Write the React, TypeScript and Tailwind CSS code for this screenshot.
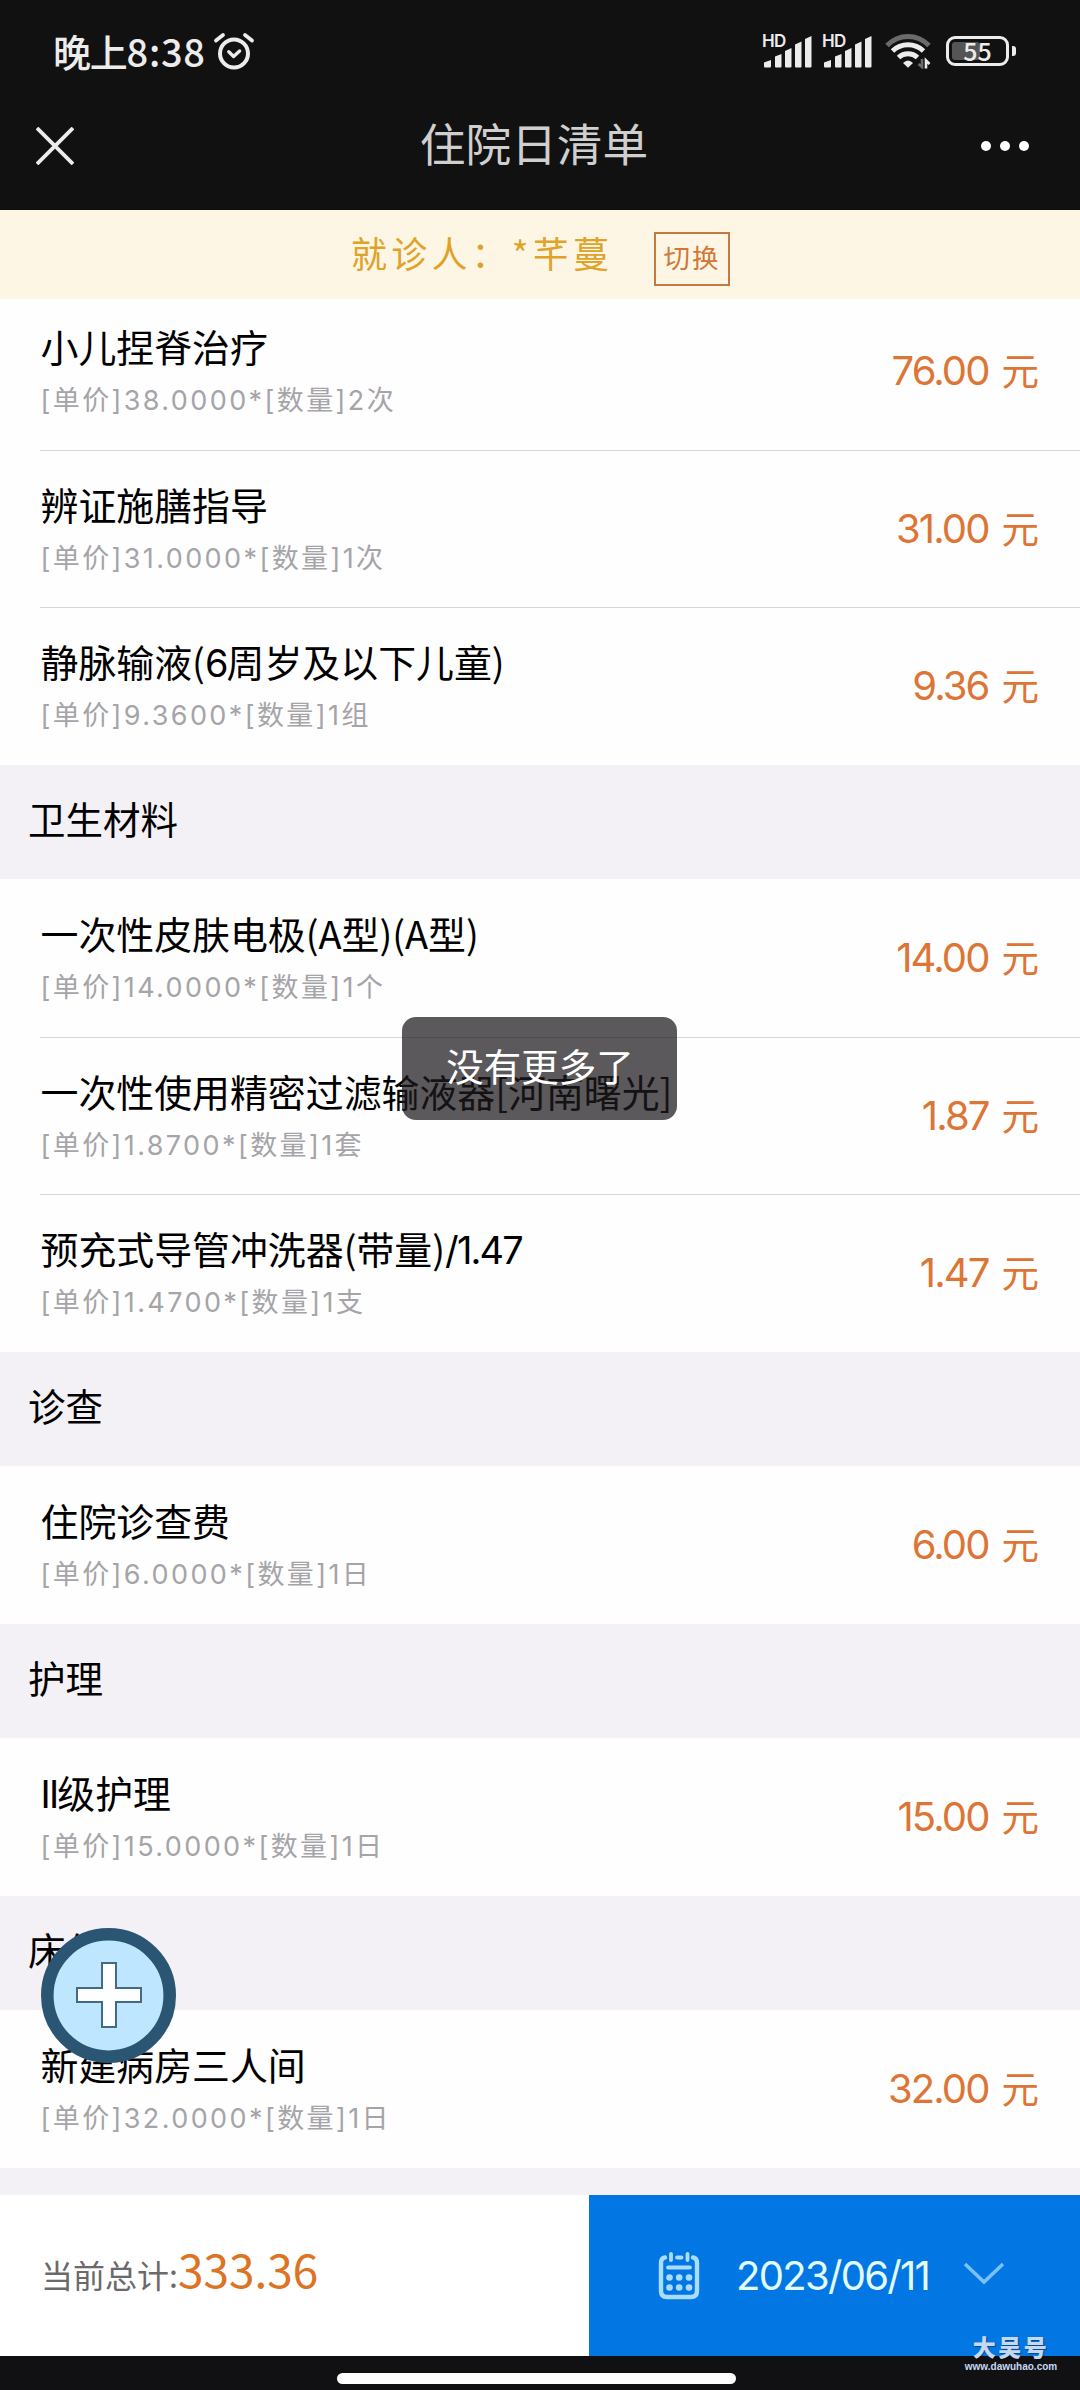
import { Fragment } from 'react';

interface Item {
    name: string;
    detail: string;
    price: string;
}

interface Group {
    title?: string;
    items: Item[];
}

const groups: Group[] = [
    {
        items: [
            { name: '小儿捏脊治疗', detail: '[单价]38.0000*[数量]2次', price: '76.00' },
            { name: '辨证施膳指导', detail: '[单价]31.0000*[数量]1次', price: '31.00' },
            { name: '静脉输液(6周岁及以下儿童)', detail: '[单价]9.3600*[数量]1组', price: '9.36' },
        ],
    },
    {
        title: '卫生材料',
        items: [
            { name: '一次性皮肤电极(A型)(A型)', detail: '[单价]14.0000*[数量]1个', price: '14.00' },
            { name: '一次性使用精密过滤输液器[河南曙光]', detail: '[单价]1.8700*[数量]1套', price: '1.87' },
            { name: '预充式导管冲洗器(带量)/1.47', detail: '[单价]1.4700*[数量]1支', price: '1.47' },
        ],
    },
    {
        title: '诊查',
        items: [{ name: '住院诊查费', detail: '[单价]6.0000*[数量]1日', price: '6.00' }],
    },
    {
        title: '护理',
        items: [{ name: 'II级护理', detail: '[单价]15.0000*[数量]1日', price: '15.00' }],
    },
    {
        title: '床位',
        items: [{ name: '新建病房三人间', detail: '[单价]32.0000*[数量]1日', price: '32.00' }],
    },
];

function AlarmIcon() {
    return (
        <svg width="42" height="40" viewBox="0 0 42 40" fill="none" stroke="#ececec" strokeLinecap="round" strokeLinejoin="round">
            <circle cx="21" cy="22.500" r="14" strokeWidth="4" />
            <path d="M15.800 20.800l4.800 4.600 6-5.400" strokeWidth="3.400" />
            <path d="M3 9.500 10 4M39 9.500 32 4" strokeWidth="3.800" />
        </svg>
    );
}

function SignalIcon() {
    return (
        <div className="relative w-[50px] h-[34px]">
            <span className="absolute left-0 top-[1px] font-['Inter'] text-[17px] leading-[13px] font-semibold tracking-[-0.800px]">HD</span>
            <svg width="50" height="34" viewBox="0 0 50 34" fill="#ececec">
                <path d="M2 28.500 9 26v6.500q0 1-1 1H3q-1 0-1-1z" />
                <path d="M13 22.500 19.500 20v12.500q0 1-1 1H14q-1 0-1-1z" />
                <path d="M23 17 29.500 14v18.500q0 1-1 1H24q-1 0-1-1z" />
                <path d="M33 10.500 39.500 7.500v25q0 1-1 1H34q-1 0-1-1z" />
                <path d="M43 5 49.500 2v30.500q0 1-1 1H44q-1 0-1-1z" />
            </svg>
        </div>
    );
}

function WifiIcon() {
    return (
        <svg width="46" height="36" viewBox="0 0 46 36" fill="none" strokeWidth="5">
            <path d="M2 12.500Q11 3.500 23 3.500t21 9" stroke="#6b6b6b" />
            <path d="M7.500 18Q14 11.800 23 11.800T38.500 18" stroke="#ececec" />
            <path d="M13.500 24.500Q17.500 20.800 23 20.800t9.500 3.700" stroke="#ececec" />
            <path d="M18 30q5-5 10 0l-5 4.800z" fill="#ececec" stroke="none" />
            <path d="M37 26v8l-3.500-3" stroke="#6b6b6b" strokeWidth="2.600" />
            <path d="M41 35.500v-8l3.500 3.500" stroke="#ececec" strokeWidth="2.600" />
        </svg>
    );
}

function BatteryIcon() {
    return (
        <div className="flex items-center gap-[3px]">
            <div className="relative w-[63px] h-[30px] rounded-[9px] border-[3px] border-[#ececec] p-[3px]">
                <div className="w-[28px] h-full rounded-[3px] bg-[#555]" />
                <span className="absolute inset-0 flex items-center justify-center pb-[1px] font-['Noto_Sans_CJK_SC'] text-[25px] leading-none font-medium">55</span>
            </div>
            <div className="w-[4px] h-[10px] rounded-r-[3px] bg-[#ececec]" />
        </div>
    );
}

function CalendarIcon() {
    return (
        <svg width="42" height="50" viewBox="0 0 42 50" fill="none" stroke="#a9dcff" strokeWidth="4.400" strokeLinecap="round">
            <path d="M7 6.500Q3 7 3 12v28q0 6 6 6h24q6 0 6-6V12q0-5-4-5.500" />
            <path d="M13 3v6M29.500 3v6M19 6.500h4.500M10 16.500h22" strokeWidth="3.800" />
            <path d="M11.500 26.500h.01M21.200 26.500h.01M31 26.500h.01M11.500 36.500h.01M21.200 36.500h.01M31 36.500h.01" strokeWidth="6.600" />
        </svg>
    );
}

// Numbers and latin capitals sit tighter than the Chinese text around them
function ItemName({ text }: { text: string }) {
    return text.split(/([\dI./]+)/).map((part, i) =>
        i % 2 ? (
            <span key={i} className="font-['Inter'] tracking-[-1.800px]">{part}</span>
        ) : (
            part
        )
    );
}

function ItemRow({ item, first }: { item: Item; first: boolean }) {
    return (
        <div className="h-[157.5px] pl-10">
            <div className={`h-full flex items-start justify-between pr-[41px] ${first ? 'pt-px' : 'border-t border-[#d5d4d7]'}`}>
                <div className="pt-[27px] pl-[0.500px]">
                    <div className="text-[37.900px] leading-[52px] h-[52px] text-black whitespace-nowrap"><ItemName text={item.name} /></div>
                    <div className="text-[27px] leading-[40px] mt-[9px] tracking-[2.400px] text-[#a5a4a8] font-['Inter','Noto_Sans_CJK_SC',sans-serif] whitespace-nowrap">{item.detail}</div>
                </div>
                <div className="mt-[50px] flex items-baseline gap-[13px] leading-[52px] text-[#dc7535] whitespace-nowrap">
                    <span className="font-['Inter'] text-[40px] tracking-[-1.900px]">{item.price}</span>
                    <span className="text-[37.500px]">元</span>
                </div>
            </div>
        </div>
    );
}

export default function App() {
    return (
        <div className="relative w-[1080px] h-[2390px] flex flex-col overflow-hidden bg-white font-['Noto_Sans_CJK_SC',sans-serif]">
            <header className="h-[210px] shrink-0 bg-[#111] text-[#ececec]">
                <div className="h-[82px] pt-[20px] pl-[53px] pr-[64px] flex items-center justify-between">
                    <div className="flex items-center gap-[7px]">
                        <span className="text-[38px] leading-none font-medium tracking-[-1.200px]">
                            晚上<span className="tracking-[0.700px]">8:38</span>
                        </span>
                        <AlarmIcon />
                    </div>
                    <div className="flex items-center">
                        <SignalIcon />
                        <div className="w-[10px]" />
                        <SignalIcon />
                        <div className="w-[13px]" />
                        <WifiIcon />
                        <div className="w-[15px]" />
                        <BatteryIcon />
                    </div>
                </div>
                <div className="h-[128px] px-[36px] pb-[1px] flex items-center justify-between">
                    <svg width="38" height="38" viewBox="0 0 38 38" stroke="#ececec" strokeWidth="3.800">
                        <path d="M1 1l36 36M37 1 1 37" />
                    </svg>
                    <h1 className="text-[45.700px] leading-none text-[#cfcfcf] ml-[14px] pb-[5px]">住院日清单</h1>
                    <svg width="50" height="12" viewBox="0 0 50 12" fill="#fff" className="mr-[14px]">
                        <circle cx="6" cy="6" r="5" />
                        <circle cx="25" cy="6" r="5" />
                        <circle cx="44" cy="6" r="5" />
                    </svg>
                </div>
            </header>

            <div className="relative h-[89px] shrink-0 bg-[#fef6e5] flex items-start pl-[351px]">
                <span className="text-[36px] leading-[52px] mt-[16px] tracking-[4.200px] text-[#dfa32a] whitespace-nowrap">就诊人：*芊蔓</span>
                <button className="absolute left-[654px] top-[22px] w-[76px] h-[54px] border-2 border-[#c27a42] text-[26.500px] leading-[44px] pb-[4px] tracking-[2px] text-[#cf7838] whitespace-nowrap">切换</button>
            </div>

            <main className="h-[1896px] shrink-0 overflow-hidden bg-[#f3f1f5]">
                <div className="-mt-[7px]">
                    {groups.map((group, idx) => (
                        <Fragment key={idx}>
                            {group.title && (
                                <h2 className="h-[114.5px] pl-[28px] pb-[8px] flex items-center text-[37.500px] text-black">{group.title}</h2>
                            )}
                            <div className="bg-[#fefefe]">
                                {group.items.map((item, i) => (
                                    <ItemRow key={item.name} item={item} first={i === 0} />
                                ))}
                            </div>
                        </Fragment>
                    ))}
                </div>
            </main>

            <footer className="h-[161px] shrink-0 flex">
                <div className="w-[589px] pl-[41px] flex items-baseline bg-white pt-[43px]">
                    <span className="text-[32px] leading-[60px] text-[#6b696c]">当前总计:</span>
                    <span className="text-[46px] leading-[60px] text-[#dc7424]">333.36</span>
                </div>
                <button className="flex-1 flex items-center bg-[#0277e4] pl-[69px]">
                    <CalendarIcon />
                    <span className="ml-[36px] font-['Inter'] text-[40px] leading-none tracking-[-1.700px] text-[#e2fbff]">2023/06/11</span>
                    <svg width="42" height="24" viewBox="0 0 42 24" fill="none" stroke="#7cc0f8" strokeWidth="3.500" className="ml-[34px] mb-[4px]">
                        <path d="M2 2l19 18L40 2" />
                    </svg>
                </button>
            </footer>

            <div className="h-[34px] shrink-0 bg-[#111013] flex justify-center">
                <div className="mt-[17px] w-[399px] h-[11px] rounded-full bg-white -ml-[7px]" />
            </div>

            <div className="absolute left-[402px] top-[1017px] w-[275px] h-[103px] rounded-[14px] bg-[#1c191c]/72 flex items-center justify-center pb-[7px] pl-[1px] text-[37.500px] leading-none text-white">
                没有更多了
            </div>

            <button className="absolute left-[41px] top-[1928px] w-[135px] h-[135px]">
                <svg width="135" height="135" viewBox="0 0 135 135">
                    <circle cx="67.500" cy="67.500" r="61.200" fill="#bfe6ff" stroke="#2b5673" strokeWidth="12.600" />
                    <path d="M61 35h14v25h25v14H75v25H61V74H36V60h25z" fill="#fdfeff" stroke="#456b82" strokeWidth="2" />
                </svg>
            </button>

            <div className="absolute left-[960px] top-[2331px] w-[102px] flex flex-col items-center text-[#c6d8f0]">
                <span className="text-[23px] leading-[30px] font-black tracking-[2.500px] [text-shadow:1px_1px_1px_#0006]">大吴号</span>
                <span className="font-['Liberation_Sans'] text-[10px] leading-[12px] font-bold">www.dawuhao.com</span>
            </div>
        </div>
    );
}
